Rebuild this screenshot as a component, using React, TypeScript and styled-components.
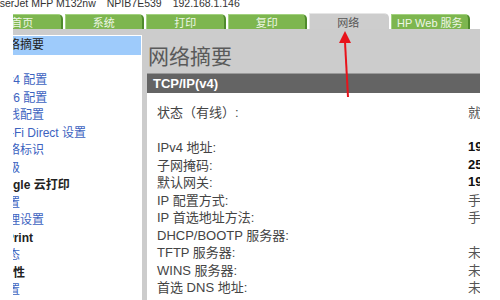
import React from 'react';
import styled, { createGlobalStyle } from 'styled-components';

const GlobalStyle = createGlobalStyle`
  html, body {
    margin: 0;
    padding: 0;
    background: #ffffff;
    width: 500px;
    height: 300px;
    overflow: hidden;
  }
  body {
    font-family: "Liberation Sans", "Noto Sans CJK SC", sans-serif;
  }
`;

const Screen = styled.div`
  position: relative;
  width: 500px;
  height: 300px;
  overflow: hidden;
`;

const DeviceLine = styled.div`
  margin: -3px 0 0 -12px;
  height: 12px;
  line-height: 12px;
  font-size: 10.5px;
  color: #333;
  white-space: nowrap;
  display: flex;
  gap: 11px;
`;

const Viewport = styled.div`
  margin: 4px 0 0 13px;
  width: 467px;
  height: 300px;
  overflow: hidden;
`;

const Page = styled.div`
  margin-left: -30px;
  width: 760px;
`;

const TabRow = styled.div`
  display: flex;
  align-items: flex-end;
  gap: 2px;
  height: 16px;
`;

const Tab = styled.div<{ $active?: boolean }>`
  box-sizing: border-box;
  width: 79.5px;
  height: ${p => (p.$active ? '16px' : '15px')};
  display: flex;
  align-items: center;
  justify-content: center;
  font-size: 11px;
  white-space: nowrap;
  border-top-right-radius: 5px;
  background: ${p => (p.$active ? '#cdcdcd' : '#7db64f')};
  color: ${p => (p.$active ? '#555' : '#eef6e6')};
  border-top: 1px solid ${p => (p.$active ? '#e6e6e6' : '#a3d27f')};
  border-left: 1px solid ${p => (p.$active ? '#e6e6e6' : '#a3d27f')};
  border-right: 2px solid ${p => (p.$active ? '#cdcdcd' : '#4f8a2c')};
`;

const Band = styled.div`
  height: 6px;
  background: #cccccc;
`;

const Body = styled.div`
  display: flex;
  background: #cccccc;
  height: 270px;
`;

const Sidebar = styled.div`
  width: 159px;
  flex: none;
  background: #ffffff;
  padding-top: 1px;
  box-sizing: border-box;
`;

const Selected = styled.div`
  height: 19px;
  line-height: 19px;
  margin: 0 1px 17px 0;
  padding-left: 13px;
  background: #9ecbfb;
  color: #222;
  font-size: 12px;
  white-space: nowrap;
`;

const NavItem = styled.div<{ $head?: boolean }>`
  height: 17.5px;
  line-height: 17.5px;
  font-size: 12px;
  white-space: nowrap;
  padding-left: ${p => (p.$head ? '6px' : '13px')};
  color: ${p => (p.$head ? '#222' : '#3d63bf')};
  font-weight: ${p => (p.$head ? 700 : 400)};
`;

const Content = styled.div`
  flex: 1;
  padding: 0 0 0 5px;
`;

const Title = styled.h1`
  margin: 0;
  padding-left: 1px;
  height: 38px;
  line-height: 40px;
  font-size: 21px;
  font-weight: 400;
  color: #5a5a5a;
  font-family: "Noto Sans CJK SC", sans-serif;
`;

const SectionBar = styled.div`
  box-sizing: border-box;
  height: 20px;
  line-height: 19px;
  border-top: 1px solid #9a9a9a;
  background: #646464;
  color: #ffffff;
  font-weight: 700;
  font-size: 13px;
  padding-left: 6px;
`;

const Panel = styled.div`
  background: #ffffff;
  padding: 10px 0 20px 10px;
  display: grid;
  grid-template-columns: 311px 1fr;
  grid-auto-rows: 17.5px;
  align-items: center;
  font-size: 13px;
`;

const Label = styled.div`
  color: #444;
  white-space: nowrap;
`;

const Value = styled.div<{ $strong?: boolean }>`
  white-space: nowrap;
  color: ${p => (p.$strong ? '#111' : '#555')};
  font-weight: ${p => (p.$strong ? 700 : 400)};
`;

const Arrow = styled.svg`
  position: absolute;
  left: 330px;
  top: 26px;
`;

const tabs = ['首页', '系统', '打印', '复印', '网络', 'HP Web 服务'];

const nav: { text: string; head?: boolean }[] = [
  { text: 'IPv4 配置' },
  { text: 'IPv6 配置' },
  { text: '无线配置' },
  { text: 'Wi-Fi Direct 设置' },
  { text: '网络标识' },
  { text: '高级' },
  { text: 'Google 云打印', head: true },
  { text: '设置' },
  { text: '代理设置' },
  { text: 'AirPrint', head: true },
  { text: '状态' },
  { text: '安全性', head: true },
  { text: '设置' },
  { text: '证书' },
];

const rows: { label: string; value: string; strong?: boolean }[] = [
  { label: '状态（有线）:', value: '就绪' },
  { label: '', value: '' },
  { label: 'IPv4 地址:', value: '192.168.1.146', strong: true },
  { label: '子网掩码:', value: '255.255.255.0', strong: true },
  { label: '默认网关:', value: '192.168.1.1', strong: true },
  { label: 'IP 配置方式:', value: '手动' },
  { label: 'IP 首选地址方法:', value: '手动' },
  { label: 'DHCP/BOOTP 服务器:', value: '' },
  { label: 'TFTP 服务器:', value: '未指定' },
  { label: 'WINS 服务器:', value: '未指定' },
  { label: '首选 DNS 地址:', value: '未指定' },
];

export default function App() {
  return (
    <Screen>
      <GlobalStyle />
      <DeviceLine>
        <span>LaserJet MFP M132nw</span>
        <span>NPIB7E539</span>
        <span>192.168.1.146</span>
      </DeviceLine>
      <Viewport>
        <Page>
          <TabRow>
            {tabs.map(t => (
              <Tab key={t} $active={t === '网络'}>{t}</Tab>
            ))}
          </TabRow>
          <Band />
          <Body>
            <Sidebar>
              <Selected>网络摘要</Selected>
              {nav.map((n, i) => (
                <NavItem key={i} $head={n.head}>{n.text}</NavItem>
              ))}
            </Sidebar>
            <Content>
              <Title>网络摘要</Title>
              <SectionBar>TCP/IP(v4)</SectionBar>
              <Panel>
                {rows.map((r, i) => (
                  <React.Fragment key={i}>
                    <Label>{r.label}</Label>
                    <Value $strong={r.strong}>{r.value}</Value>
                  </React.Fragment>
                ))}
              </Panel>
            </Content>
          </Body>
        </Page>
      </Viewport>
      <Arrow width="30" height="76" viewBox="0 0 30 76">
        <polygon points="15,5 9,17 21,17" fill="#e8131b" />
        <line x1="15" y1="16" x2="18" y2="71" stroke="#e8131b" strokeWidth="2" />
      </Arrow>
    </Screen>
  );
}
